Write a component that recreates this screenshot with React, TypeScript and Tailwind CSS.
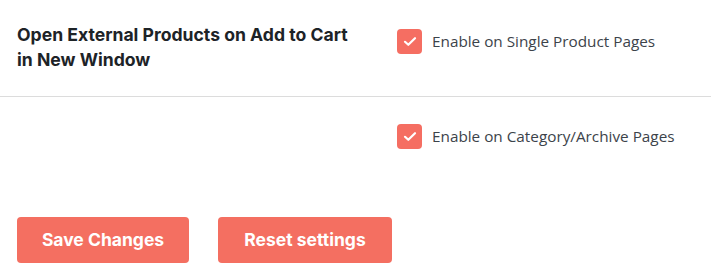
import React from "react";

function Check({ label }: { label: string }) {
  return (
    <label className="flex items-center gap-[10px]">
      <span className="flex h-[25px] w-[25px] items-center justify-center rounded-[4px] bg-[#f56e62]">
        <svg width="14" height="11" viewBox="0 0 14 11" fill="none">
          <path d="M2 5.8 L5.3 8.8 L12 2.2" stroke="white" strokeWidth="2.2" strokeLinecap="round" strokeLinejoin="round" />
        </svg>
      </span>
      <span className="text-[15.3px] text-[#3c434a]" style={{ fontFamily: '"Open Sans", sans-serif' }}>{label}</span>
    </label>
  );
}

export default function App() {
  return (
    <div className="w-[711px] h-[279px] bg-white" style={{ fontFamily: "Inter, sans-serif" }}>
      <div className="flex h-[97px] border-b border-[#dcdcdc]">
        <div className="w-[397px] shrink-0 pl-[17px] pt-[22px] text-[17.6px] font-bold leading-[25px] text-[#1d2327]">
          Open External Products on Add to Cart<br />in New Window
        </div>
        <div className="pt-[29px]">
          <Check label="Enable on Single Product Pages" />
        </div>
      </div>
      <div className="flex h-[120px]">
        <div className="w-[397px] shrink-0" />
        <div className="pt-[27px]">
          <Check label="Enable on Category/Archive Pages" />
        </div>
      </div>
      <div className="flex gap-[29px] pl-[17px]">
        <button className="h-[46px] w-[172px] rounded-[4px] bg-[#f46f61] text-[17.5px] font-bold text-white">Save Changes</button>
        <button className="h-[46px] w-[174px] rounded-[4px] bg-[#f46f61] text-[17.5px] font-bold text-white">Reset settings</button>
      </div>
    </div>
  );
}
